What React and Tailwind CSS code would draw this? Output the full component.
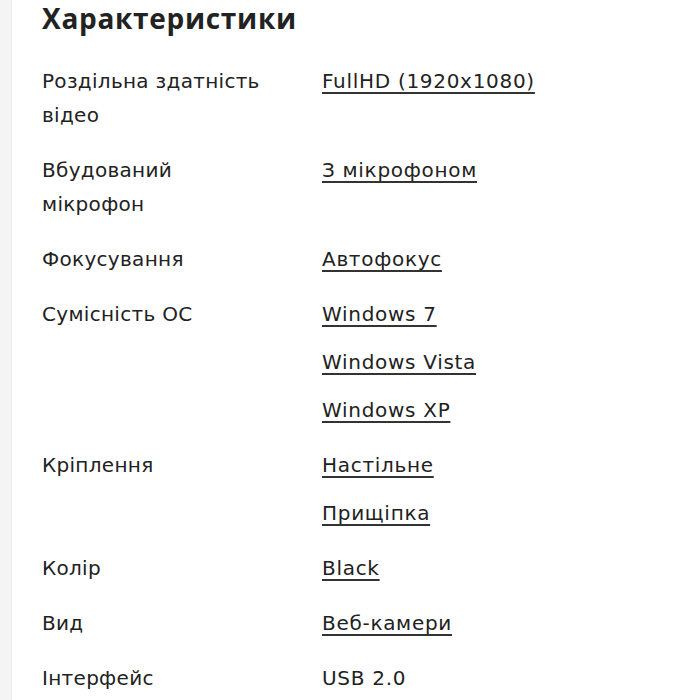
import React from "react";

const rows = [
  { label: ["Роздільна здатність", "відео"], values: ["FullHD (1920x1080)"] },
  { label: ["Вбудований", "мікрофон"], values: ["З мікрофоном"] },
  { label: ["Фокусування"], values: ["Автофокус"] },
  { label: ["Сумісність ОС"], values: ["Windows 7", "Windows Vista", "Windows XP"] },
  { label: ["Кріплення"], values: ["Настільне", "Прищіпка"] },
  { label: ["Колір"], values: ["Black"] },
  { label: ["Вид"], values: ["Веб-камери"] },
  { label: ["Інтерфейс"], values: ["USB 2.0"], plain: true },
];

export default function App() {
  return (
    <div className="flex w-[685px] h-[700px] overflow-hidden bg-white text-[#222222]">
      <div className="w-[12px] shrink-0 bg-[#f4f4f4] border-r border-[#ededed]" />
      <div className="flex-1 pl-[30px]">
        <h2
          className="text-[28px] leading-[34px] font-bold pt-[1px] tracking-[0.7px]"
          style={{ fontFamily: '"Open Sans", "Noto Sans", sans-serif' }}
        >
          Характеристики
        </h2>
        <div
          className="mt-[29px] flex flex-col gap-[21px] text-[20px] leading-[34px] tracking-[0.3px]"
          style={{ fontFamily: '"DejaVu Sans", "Noto Sans", sans-serif' }}
        >
          {rows.map((r, i) => (
            <div key={i} className="grid grid-cols-[280px_1fr]">
              <div>
                {r.label.map((l, j) => (
                  <div key={j}>{l}</div>
                ))}
              </div>
              <div className="flex flex-col gap-[14px] tracking-[0.7px]">
                {r.values.map((v, j) => (
                  <div key={j}>
                    <span
                      className={
                        r.plain
                          ? ""
                          : "underline decoration-[1.5px] underline-offset-[4px] decoration-[#333]"
                      }
                    >
                      {v}
                    </span>
                  </div>
                ))}
              </div>
            </div>
          ))}
        </div>
      </div>
    </div>
  );
}
